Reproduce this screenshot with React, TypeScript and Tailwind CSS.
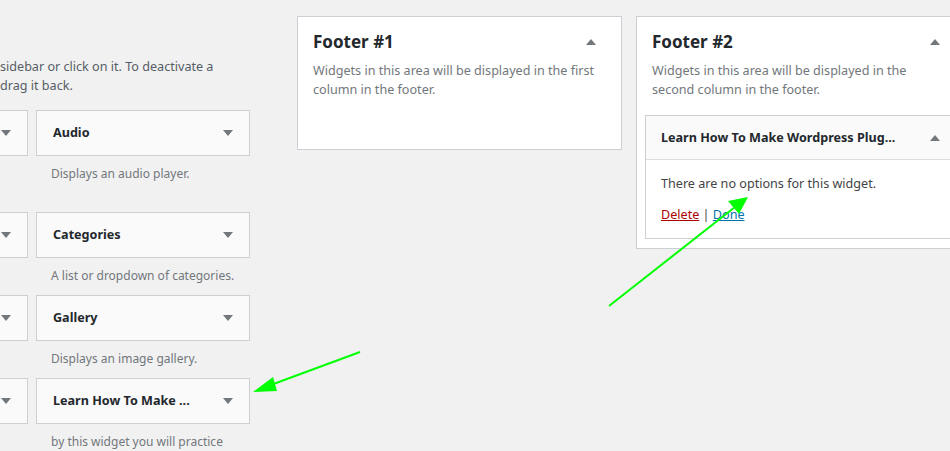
import React from 'react';

const font = { fontFamily: '"Noto Sans", "Open Sans", sans-serif' };

function Caret({ up = false }: { up?: boolean }) {
  return (
    <svg width="10" height="6" viewBox="0 0 10 6" className="shrink-0">
      {up ? <polygon points="0,6 10,6 5,0" fill="#72777c" /> : <polygon points="0,0 10,0 5,6" fill="#72777c" />}
    </svg>
  );
}

interface Row {
  title: string;
  desc: string;
  height: string;
}

const rows: Row[] = [
  { title: 'Audio', desc: 'Displays an audio player.', height: 'h-[102px]' },
  { title: 'Categories', desc: 'A list or dropdown of categories.', height: 'h-[83px]' },
  { title: 'Gallery', desc: 'Displays an image gallery.', height: 'h-[83px]' },
  { title: 'Learn How To Make ...', desc: 'by this widget you will practice', height: 'h-[83px]' },
];

function WidgetRow({ row }: { row: Row }) {
  return (
    <div className={`flex ${row.height}`}>
      {/* cut-off widget from the previous column */}
      <div className="w-[28px] h-[46px] bg-[#fafafa] border-y border-r border-[#ccd0d4] flex items-center pl-[1px]">
        <Caret />
      </div>
      <div className="ml-[8px] w-[214px]">
        <div className="h-[46px] bg-[#fafafa] border border-[#ccd0d4] flex items-center justify-between pl-[16px] pr-[16px]">
          <span className="text-[12.6px] font-bold text-[#23282d]">{row.title}</span>
          <Caret />
        </div>
        <p className="mt-[9px] pl-[15px] text-[12px] text-[#72777c]">{row.desc}</p>
      </div>
    </div>
  );
}

export default function App() {
  return (
    <div className="relative w-[950px] h-[451px] overflow-hidden bg-[#f1f1f1] flex" style={font}>
      {/* Available widgets */}
      <div className="w-[297px] shrink-0">
        <div className="pt-[57px] h-[110px] text-[12.6px] leading-[19px] text-[#555d66]">
          <p>sidebar or click on it. To deactivate a</p>
          <p>drag it back.</p>
        </div>
        {rows.map((row) => (
          <WidgetRow key={row.title} row={row} />
        ))}
      </div>

      {/* Footer #1 */}
      <div className="pt-[16px] w-[325px] shrink-0">
        <div className="h-[134px] bg-white border border-[#ccd0d4] px-[15px] pt-[12px]">
          <div className="flex items-center justify-between">
            <h2 className="text-[17px] font-bold text-[#23282d]">Footer #1</h2>
            <span className="mr-[10px]"><Caret up /></span>
          </div>
          <p className="mt-[6px] text-[12.6px] leading-[19px] text-[#72777c]">
            Widgets in this area will be displayed in the first column in the footer.
          </p>
        </div>
      </div>

      {/* Footer #2 */}
      <div className="pt-[16px] ml-[14px] w-[330px] shrink-0">
        <div className="h-[233px] bg-white border border-[#ccd0d4] pl-[15px] pt-[12px]">
          <div className="flex items-center justify-between pr-[25px]">
            <h2 className="text-[17px] font-bold text-[#23282d]">Footer #2</h2>
            <Caret up />
          </div>
          <p className="mt-[6px] pr-[30px] text-[12.6px] leading-[19px] text-[#72777c]">
            Widgets in this area will be displayed in the second column in the footer.
          </p>
          <div className="mt-[16px] ml-[-7px] border border-[#ccd0d4] h-[124px]">
            <div className="h-[44px] bg-[#fafafa] border-b border-[#dcdcde] flex items-center justify-between pl-[15px] pr-[24px] pt-[2px]">
              <span className="text-[12.6px] font-bold text-[#23282d]">Learn How To Make Wordpress Plug...</span>
              <Caret up />
            </div>
            <div className="pl-[15px] pt-[15px] text-[12.6px] text-[#444]">
              <p>There are no options for this widget.</p>
              <p className="mt-[13px]">
                <a href="#" className="text-[#a00] underline">Delete</a>
                {' | '}
                <a href="#" className="text-[#0073aa] underline">Done</a>
              </p>
            </div>
          </div>
        </div>
      </div>

      {/* green annotation arrows */}
      <svg className="absolute inset-0 pointer-events-none" width="950" height="451">
        <line x1="360" y1="352" x2="268" y2="386" stroke="#00ff00" strokeWidth="2" />
        <polygon points="253,392 273,377 277,391" fill="#00ff00" />
        <line x1="609" y1="306" x2="735" y2="207" stroke="#00ff00" strokeWidth="2" />
        <polygon points="748,197 728,201 739,214" fill="#00ff00" />
      </svg>
    </div>
  );
}
